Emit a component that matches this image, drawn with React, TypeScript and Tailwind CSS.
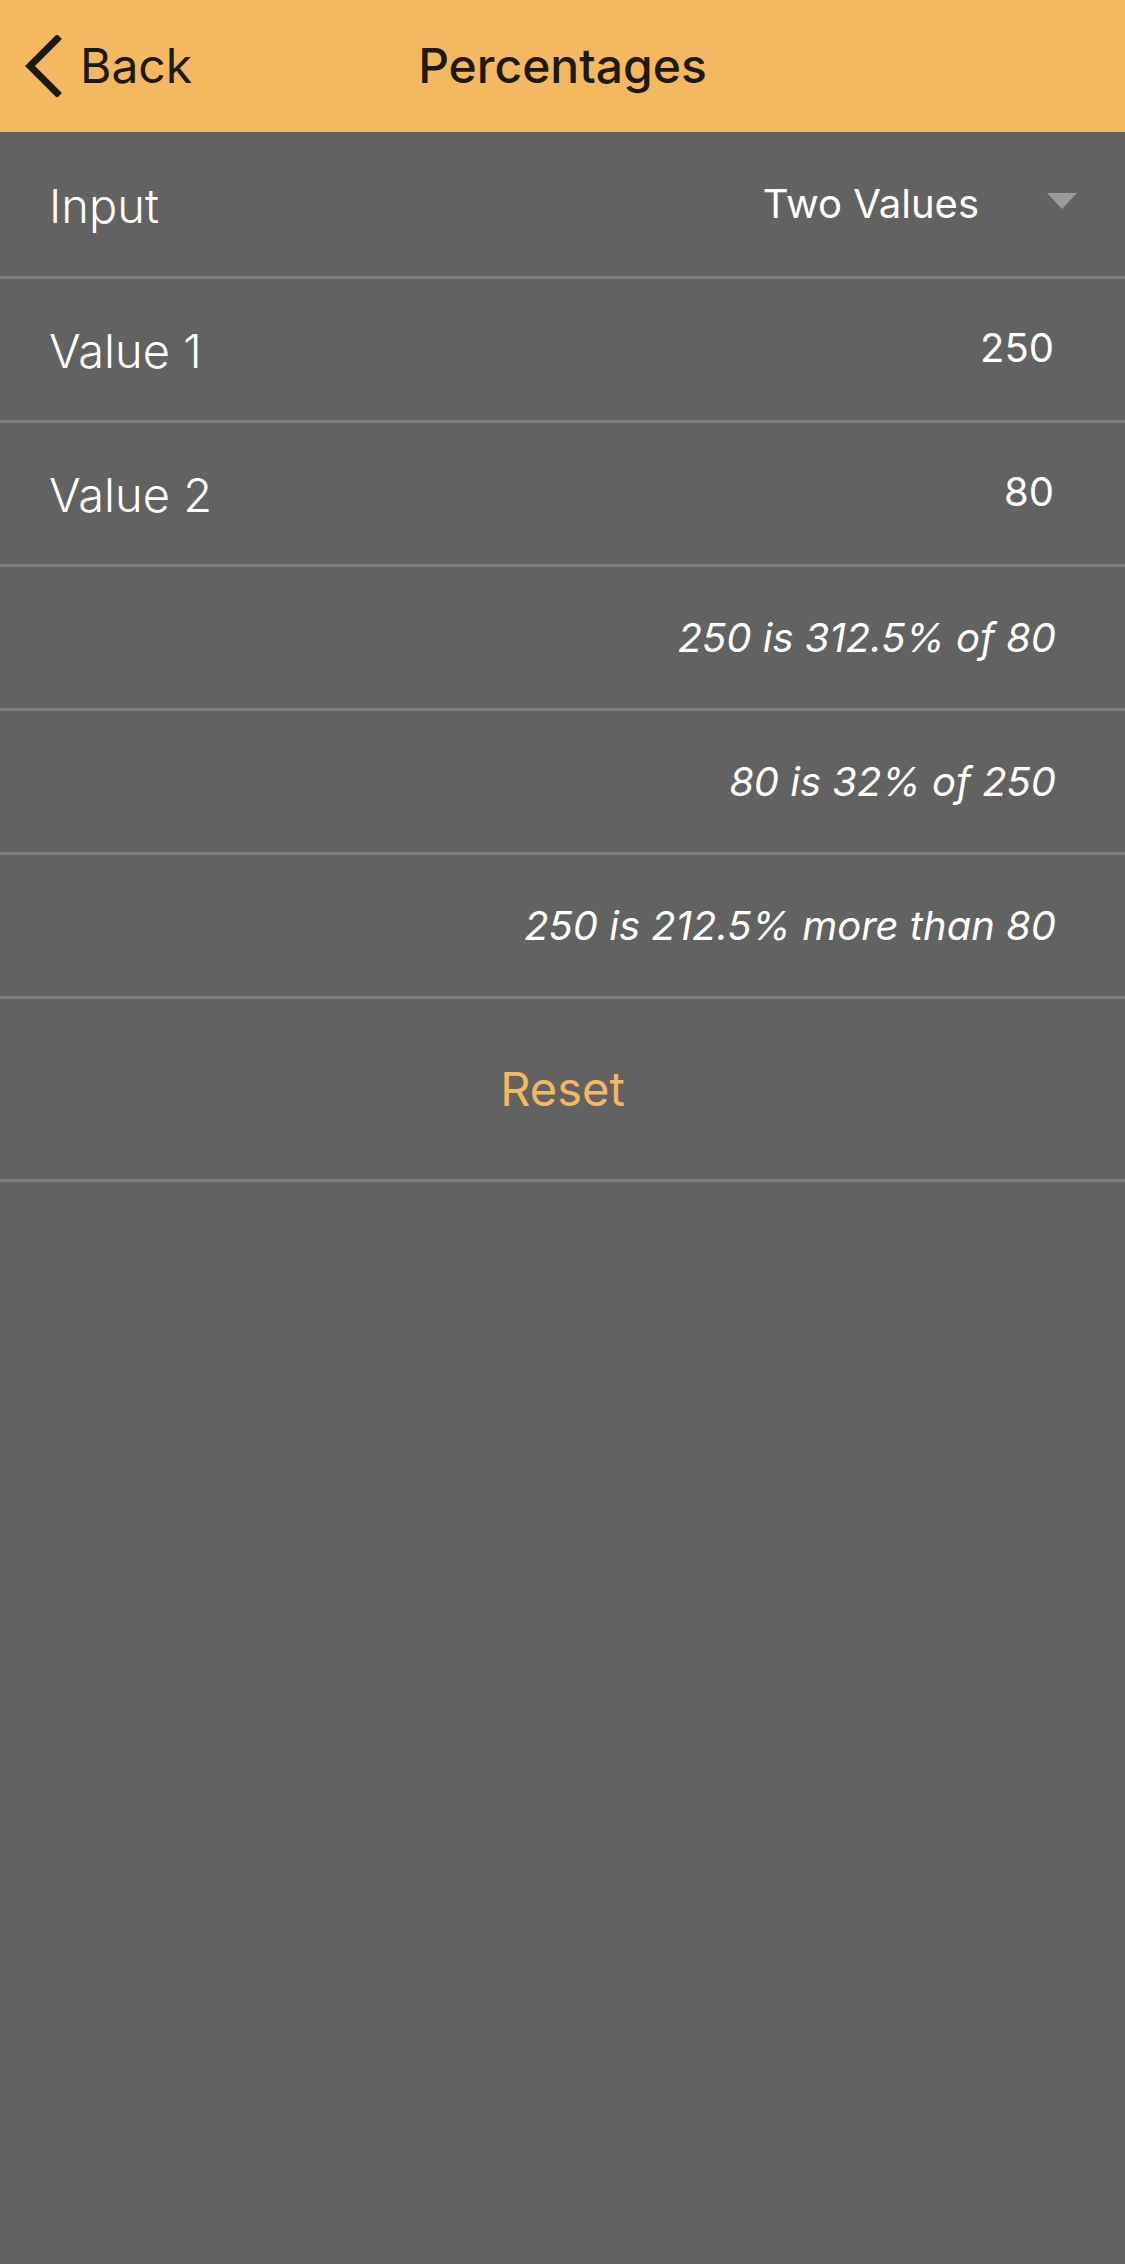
import React from "react";

const font = { fontFamily: "Inter, 'Noto Sans', sans-serif" };

function Divider() {
  return <div className="h-[3px] w-full bg-[#7f7f7f]" />;
}

function ResultRow({ text }: { text: string }) {
  return (
    <>
      <div className="flex h-[141px] items-center justify-end pr-[69px]">
        <span className="text-[40px] italic font-normal text-white">{text}</span>
      </div>
      <Divider />
    </>
  );
}

export default function App() {
  return (
    <div className="flex min-h-[2264px] w-[1125px] flex-col bg-[#626262]" style={font}>
      <header className="relative flex h-[132px] items-center bg-[#f4b860]">
        <div className="flex items-center pl-[24px]">
          <svg width="38" height="62" viewBox="0 0 38 62" className="mt-[-1px]">
            <path d="M33 4 L6 31 L33 58" fill="none" stroke="#1e1a12" strokeWidth="7" strokeLinecap="square" />
          </svg>
          <span className="ml-[18px] text-[48px] font-normal text-[#1e1a12] leading-none">Back</span>
        </div>
        <div className="absolute inset-x-0 top-0 flex h-full items-center justify-center pointer-events-none">
          <span className="text-[48px] font-medium text-[#1e1a12] leading-none">Percentages</span>
        </div>
      </header>

      <div className="flex h-[144px] items-center justify-between pl-[49px] pr-[48px]">
        <span className="mt-[5px] text-[47px] font-light text-white">Input</span>
        <div className="flex items-center">
          <span className="text-[40px] font-normal text-white">Two Values</span>
          <svg width="30" height="16" viewBox="0 0 30 16" className="ml-[68px] mb-[6px]">
            <path d="M0 0 H30 L15 16 Z" fill="#9b9b9b" />
          </svg>
        </div>
      </div>
      <Divider />

      <div className="flex h-[141px] items-center justify-between pl-[49px] pr-[71px]">
        <span className="mt-[4px] text-[47px] font-light text-white">Value 1</span>
        <span className="text-[40px] font-normal text-white mb-[4px]">250</span>
      </div>
      <Divider />

      <div className="flex h-[141px] items-center justify-between pl-[49px] pr-[71px]">
        <span className="mt-[4px] text-[47px] font-light text-white">Value 2</span>
        <span className="text-[40px] font-normal text-white mb-[4px]">80</span>
      </div>
      <Divider />

      <ResultRow text="250 is 312.5% of 80" />
      <ResultRow text="80 is 32% of 250" />
      <ResultRow text="250 is 212.5% more than 80" />

      <div className="flex h-[180px] items-center justify-center">
        <span className="text-[47px] font-normal text-[#f4b860]">Reset</span>
      </div>
      <Divider />
    </div>
  );
}
